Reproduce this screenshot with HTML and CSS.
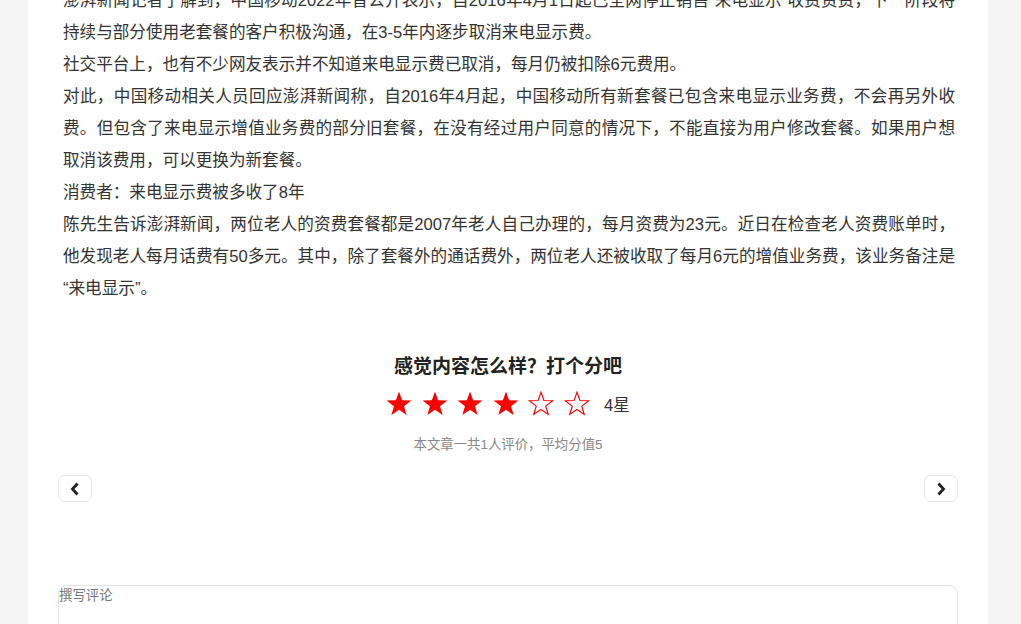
FILE: index.html
```html
<!DOCTYPE html>
<html lang="zh-CN">
<head>
    <meta charset="UTF-8">
    <meta name="viewport" content="width=device-width, initial-scale=1.0">
    <title>来电显示费被多收了8年</title>
    <link rel="stylesheet" href="styles.css">
</head>
<body>
    <div class="page">
        <div class="article">
            <p>澎湃新闻记者了解到，中国移动2022年曾公开表示，自2016年4月1日起已全网停止销售“来电显示”收费资费，下一阶段将持续与部分使用老套餐的客户积极沟通，在3-5年内逐步取消来电显示费。</p>
            <p>社交平台上，也有不少网友表示并不知道来电显示费已取消，每月仍被扣除6元费用。</p>
            <p>对此，中国移动相关人员回应澎湃新闻称，自2016年4月起，中国移动所有新套餐已包含来电显示业务费，不会再另外收费。但包含了来电显示增值业务费的部分旧套餐，在没有经过用户同意的情况下，不能直接为用户修改套餐。如果用户想取消该费用，可以更换为新套餐。</p>
            <p>消费者：来电显示费被多收了8年</p>
            <p>陈先生告诉澎湃新闻，两位老人的资费套餐都是2007年老人自己办理的，每月资费为23元。近日在检查老人资费账单时，他发现老人每月话费有50多元。其中，除了套餐外的通话费外，两位老人还被收取了每月6元的增值业务费，该业务备注是“来电显示”。</p>
        </div>

        <div class="rate">
            <h3>感觉内容怎么样？打个分吧</h3>
            <div class="stars">
                <svg class="star" viewBox="0 0 26 25"><polygon class="on" points="13,0.5 16.12,9.21 25.36,9.48 18.04,15.14 20.64,24.02 13,18.8 5.36,24.02 7.96,15.14 0.64,9.48 9.88,9.21"/></svg>
                <svg class="star" viewBox="0 0 26 25"><polygon class="on" points="13,0.5 16.12,9.21 25.36,9.48 18.04,15.14 20.64,24.02 13,18.8 5.36,24.02 7.96,15.14 0.64,9.48 9.88,9.21"/></svg>
                <svg class="star" viewBox="0 0 26 25"><polygon class="on" points="13,0.5 16.12,9.21 25.36,9.48 18.04,15.14 20.64,24.02 13,18.8 5.36,24.02 7.96,15.14 0.64,9.48 9.88,9.21"/></svg>
                <svg class="star" viewBox="0 0 26 25"><polygon class="on" points="13,0.5 16.12,9.21 25.36,9.48 18.04,15.14 20.64,24.02 13,18.8 5.36,24.02 7.96,15.14 0.64,9.48 9.88,9.21"/></svg>
                <svg class="star" viewBox="-0.5 -0.8 27 26.4"><polygon class="off" points="13,0.5 16.12,9.21 25.36,9.48 18.04,15.14 20.64,24.02 13,18.8 5.36,24.02 7.96,15.14 0.64,9.48 9.88,9.21"/></svg>
                <svg class="star" viewBox="-0.5 -0.8 27 26.4"><polygon class="off" points="13,0.5 16.12,9.21 25.36,9.48 18.04,15.14 20.64,24.02 13,18.8 5.36,24.02 7.96,15.14 0.64,9.48 9.88,9.21"/></svg>
                <span class="score">4星</span>
            </div>
            <div class="rate-info">本文章一共1人评价，平均分值5</div>
        </div>

        <div class="pager">
            <button class="pager-btn" title="上一篇">
                <svg viewBox="0 0 10 14" width="10" height="14"><polyline points="7.5,1.5 2.5,7 7.5,12.5"/></svg>
            </button>
            <button class="pager-btn" title="下一篇">
                <svg viewBox="0 0 10 14" width="10" height="14"><polyline points="2.5,1.5 7.5,7 2.5,12.5"/></svg>
            </button>
        </div>

        <div class="comment">
            <textarea placeholder="撰写评论"></textarea>
        </div>
    </div>
</body>
</html>
```

FILE: styles.css
```css
body {
    margin: 0;
    background-color: #f5f5f5;
    font-family: "Liberation Sans", "Noto Sans CJK SC", sans-serif;
    color: #333;
    overflow: hidden;
}
.page {
    width: 900px;
    margin-left: 28px;
    padding: 0 30px 40px;
    background: #fff;
}
.article {
    margin-top: -15px;
    padding: 0 3px 0 5px;
    font-size: 16.6px;
    line-height: 32px;
    text-align: justify;
}
.article p {
    margin: 0;
}
.rate {
    margin-top: 49px;
    text-align: center;
}
.rate h3 {
    margin: 0;
    font-size: 19px;
    line-height: 26px;
    font-weight: bold;
    color: #222;
}
.stars {
    display: flex;
    justify-content: center;
    align-items: center;
    gap: 9.5px;
    margin-top: 11px;
    height: 25px;
}
.star {
    width: 26px;
    height: 25px;
}
.star .on {
    fill: #f00;
}
.star .off {
    fill: none;
    stroke: #f00;
    stroke-width: 1.2;
}
.score {
    margin-left: 5px;
    font-size: 16.6px;
    color: #333;
}
.rate-info {
    margin-top: 19px;
    font-size: 13.4px;
    line-height: 20px;
    color: #888;
}
.pager {
    display: flex;
    justify-content: space-between;
    margin-top: 20px;
}
.pager-btn {
    width: 34px;
    height: 27px;
    padding: 0;
    border: 1px solid #e6e6e6;
    border-radius: 7px;
    background: #fff;
    display: flex;
    justify-content: center;
    align-items: center;
    cursor: pointer;
}
.pager-btn polyline {
    fill: none;
    stroke: #222;
    stroke-width: 2.8;
}
.comment {
    margin-top: 83px;
}
.comment textarea {
    display: block;
    box-sizing: border-box;
    width: 100%;
    height: 120px;
    padding: 0;
    border: 1px solid #e2e2e2;
    border-radius: 9px;
    font-family: "Liberation Sans", "Noto Sans CJK SC", sans-serif;
    font-size: 13.4px;
    line-height: 20px;
    resize: none;
    outline: none;
}
.comment textarea::placeholder {
    color: #777;
}
```
